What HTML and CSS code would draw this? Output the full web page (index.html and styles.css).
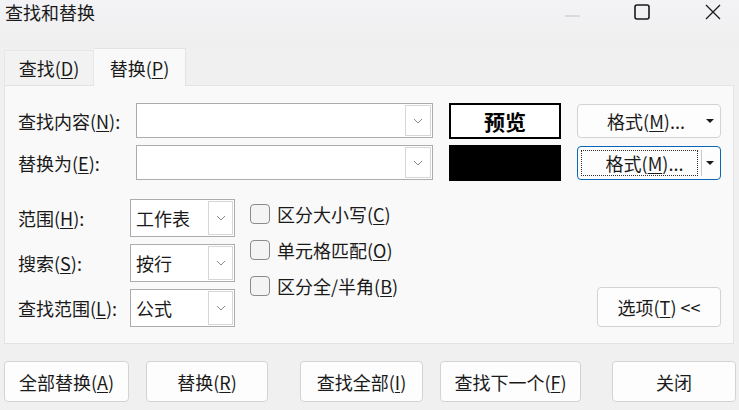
FILE: index.html
```html
<!DOCTYPE html>
<html lang="zh-CN">
<head>
<meta charset="utf-8">
<title>查找和替换</title>
<link rel="stylesheet" href="styles.css">
</head>
<body>
<div class="window">
  <div class="titlebar">
    <div class="title">查找和替换</div>
    <div class="controls">
      <span class="ctl ctl-min"><svg width="16" height="16" viewBox="0 0 16 16"><line x1="0" y1="12" x2="15" y2="12" stroke="#c4c4c4" stroke-width="1"/></svg></span>
      <span class="ctl ctl-max"><svg width="16" height="16" viewBox="0 0 16 16"><rect x="1" y="1" width="14" height="14" rx="2" fill="none" stroke="#1a1a1a" stroke-width="1.6"/></svg></span>
      <span class="ctl ctl-close"><svg width="16" height="16" viewBox="0 0 16 16"><path d="M1 1 L15 15 M15 1 L1 15" stroke="#1a1a1a" stroke-width="1.3" fill="none"/></svg></span>
    </div>
  </div>

  <div class="tabs">
    <div class="tab">查找(<u>D</u>)</div>
    <div class="tab tab-active">替换(<u>P</u>)</div>
  </div>

  <div class="panel">
    <div class="top-grid">
      <div class="label">查找内容(<u>N</u>):</div>
      <div class="input"><span class="arrowbox"><svg width="10" height="6" viewBox="0 0 10 6"><path d="M1 1 L5 5 L9 1" stroke="#8a8a8a" stroke-width="1" fill="none"/></svg></span></div>
      <div class="preview">预览</div>
      <div class="fmt-btn"><span class="fmt-text">格式(<u>M</u>)...</span><span class="tri"></span></div>

      <div class="label">替换为(<u>E</u>):</div>
      <div class="input"><span class="arrowbox"><svg width="10" height="6" viewBox="0 0 10 6"><path d="M1 1 L5 5 L9 1" stroke="#8a8a8a" stroke-width="1" fill="none"/></svg></span></div>
      <div class="preview preview-black"></div>
      <div class="fmt-btn fmt-focus"><span class="fmt-text focus-rect">格式(<u>M</u>)...</span><span class="sep"></span><span class="tri"></span></div>
    </div>

    <div class="lower">
      <div class="combo-grid">
        <div class="label">范围(<u>H</u>):</div>
        <div class="combo"><span class="combo-text">工作表</span><span class="arrowbox"><svg width="10" height="6" viewBox="0 0 10 6"><path d="M1 1 L5 5 L9 1" stroke="#8a8a8a" stroke-width="1" fill="none"/></svg></span></div>
        <div class="label">搜索(<u>S</u>):</div>
        <div class="combo"><span class="combo-text">按行</span><span class="arrowbox"><svg width="10" height="6" viewBox="0 0 10 6"><path d="M1 1 L5 5 L9 1" stroke="#8a8a8a" stroke-width="1" fill="none"/></svg></span></div>
        <div class="label">查找范围(<u>L</u>):</div>
        <div class="combo"><span class="combo-text">公式</span><span class="arrowbox"><svg width="10" height="6" viewBox="0 0 10 6"><path d="M1 1 L5 5 L9 1" stroke="#8a8a8a" stroke-width="1" fill="none"/></svg></span></div>
      </div>
      <div class="checks">
        <div class="check"><span class="box"></span><span>区分大小写(<u>C</u>)</span></div>
        <div class="check"><span class="box"></span><span>单元格匹配(<u>O</u>)</span></div>
        <div class="check"><span class="box"></span><span>区分全/半角(<u>B</u>)</span></div>
      </div>
      <div class="btn opt-btn">选项(<u>T</u>) &lt;&lt;</div>
    </div>
  </div>

  <div class="buttons">
    <div class="btn b1">全部替换(<u>A</u>)</div>
    <div class="btn b2">替换(<u>R</u>)</div>
    <div class="btn b3">查找全部(<u>I</u>)</div>
    <div class="btn b4">查找下一个(<u>F</u>)</div>
    <div class="btn b5">关闭</div>
  </div>
</div>
</body>
</html>
```

FILE: styles.css
```css
* { box-sizing: border-box; }
html, body { margin: 0; padding: 0; }
body {
  width: 739px;
  height: 410px;
  overflow: hidden;
  background: #f0f0f0;
  font-family: "Noto Sans CJK SC", "Noto Sans", "Liberation Sans", sans-serif;
  font-size: 18px;
  color: #1a1a1a;
}
u { text-decoration-thickness: 1px; text-underline-offset: 2px; }
.window { width: 739px; height: 410px; display: flex; flex-direction: column; }

.titlebar {
  height: 47px;
  display: flex;
  align-items: flex-start;
  justify-content: space-between;
  background: linear-gradient(#f3f3f6, #efefef);
}
.title { padding: 1px 0 0 5px; line-height: 22px; font-size: 18px; }
.controls { display: flex; align-items: flex-start; padding-top: 4px; }
.ctl { display: flex; width: 16px; height: 16px; }
.ctl-min { margin-right: 53px; }
.ctl-max { margin-right: 55px; }
.ctl-close { margin-right: 18px; }

.tabs { display: flex; align-items: flex-end; height: 38px; padding-left: 4px; }
.tab {
  height: 35px;
  width: 90px;
  display: flex;
  align-items: center;
  justify-content: center;
  line-height: 22px;
  background: #f2f2f2;
  border: 1px solid #e6e6e6;
  border-bottom: none;
}
.tab-active {
  height: 38px;
  width: 92px;
  background: #f9f9f9;
  border-color: #e3e3e3;
  border-left: none;
  margin-bottom: -1px;
  position: relative;
  z-index: 1;
}

.panel {
  margin-left: 4px;
  width: 730px;
  height: 259px;
  background: #f9f9f9;
  border: 1px solid #e3e3e3;
  padding: 17px 12px 16px 13px;
  display: flex;
  flex-direction: column;
}

.top-grid {
  display: grid;
  grid-template-columns: 102px 297px 112px 144px;
  column-gap: 16px;
  grid-auto-rows: 36px;
  row-gap: 6px;
  align-items: center;
}
.label { line-height: 22px; white-space: nowrap; }

.input {
  height: 35px;
  background: #fff;
  border: 1px solid #acacac;
  display: flex;
  justify-content: flex-end;
  align-self: start;
}
.arrowbox {
  width: 26px;
  margin: 1px;
  border: 1px solid #d6d6d6;
  display: flex;
  align-items: center;
  justify-content: center;
  background: #fff;
}

.preview {
  height: 36px;
  border: 2px solid #000;
  background: #fff;
  display: flex;
  align-items: center;
  justify-content: center;
  font-weight: 700;
  font-size: 21px;
  color: #000;
}
.preview-black { background: #000; }

.fmt-btn {
  height: 34px;
  background: #fdfdfd;
  border: 1px solid #d3d3d3;
  border-radius: 4px;
  display: flex;
  align-items: center;
  position: relative;
  padding: 0 6px 0 4px;
}
.fmt-text {
  flex: 1;
  text-align: center;
  line-height: 22px;
  padding-left: 10px;
}
.tri {
  width: 0; height: 0;
  border-left: 4px solid transparent;
  border-right: 4px solid transparent;
  border-top: 4px solid #1a1a1a;
  margin-left: 6px;
}
.fmt-focus {
  border: 1px solid #0a66b8;
  padding: 3px 6px 3px 3px;
  align-items: stretch;
}
.focus-rect {
  border: 1px dotted #333;
  display: flex;
  align-items: center;
  justify-content: center;
  padding-left: 10px;
}
.sep { width: 1px; background: #c8c8c8; margin-left: 3px; }
.fmt-focus .tri { align-self: center; margin-left: 4px; }

.lower {
  margin-top: 18px;
  display: flex;
  align-items: flex-start;
}
.combo-grid {
  display: grid;
  grid-template-columns: 112px 105px;
  grid-auto-rows: 38px;
  row-gap: 7px;
  align-items: center;
}
.combo {
  height: 38px;
  background: #fff;
  border: 1px solid #acacac;
  display: flex;
}
.combo-text { flex: 1; display: flex; align-items: center; padding-left: 5px; }
.combo .arrowbox { width: 25px; margin: 1px 1px 1px 0; }

.checks {
  margin-left: 15px;
  margin-top: 5px;
  display: flex;
  flex-direction: column;
  gap: 16px;
}
.check { display: flex; align-items: center; height: 20px; line-height: 22px; }
.box {
  width: 20px;
  height: 20px;
  border: 1px solid #8b8b8b;
  border-radius: 4px;
  background: #f4f4f4;
  margin-right: 7px;
}

.btn {
  height: 41px;
  background: #fdfdfd;
  border: 1px solid #d3d3d3;
  border-radius: 4px;
  display: flex;
  align-items: center;
  justify-content: center;
  line-height: 22px;
}
.opt-btn {
  margin-left: auto;
  align-self: flex-end;
  width: 124px;
  height: 40px;
}

.buttons {
  display: flex;
  margin-top: 17px;
  padding-left: 4px;
}
.b1 { width: 125px; }
.b2 { width: 122px; margin-left: 17px; }
.b3 { width: 123px; margin-left: 32px; }
.b4 { width: 141px; margin-left: 17px; }
.b5 { width: 124px; margin-left: 31px; }
```
